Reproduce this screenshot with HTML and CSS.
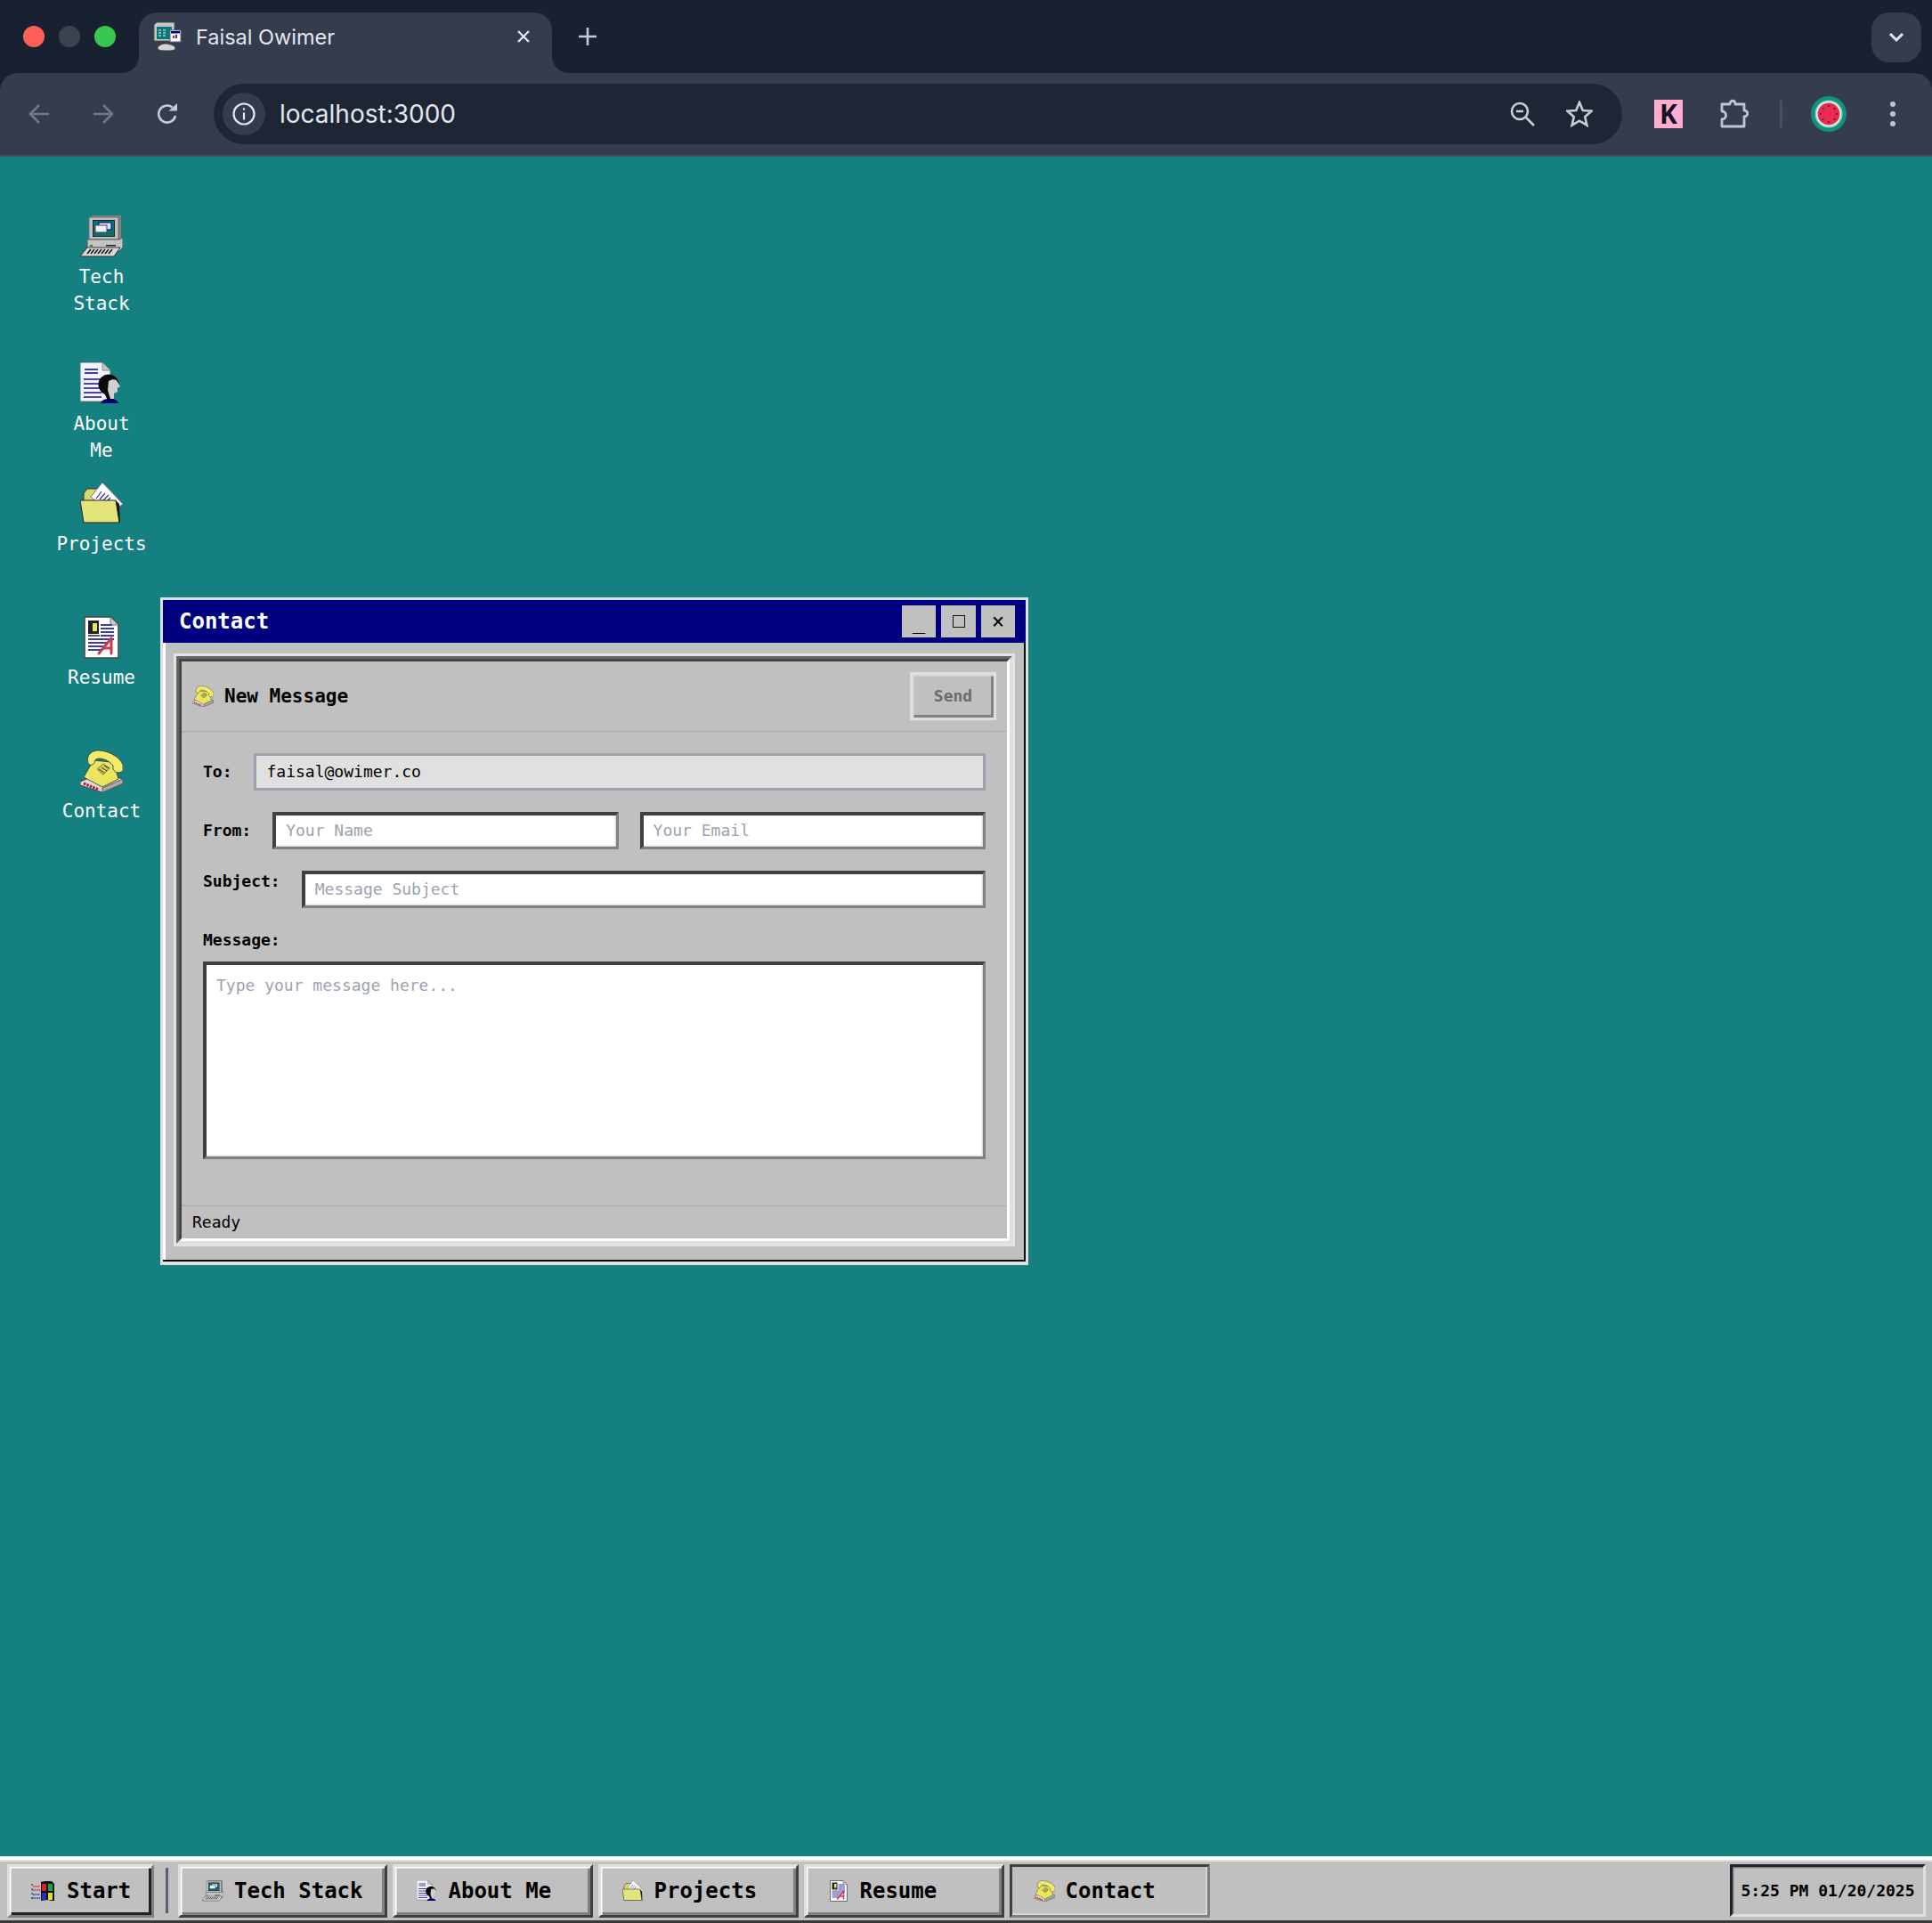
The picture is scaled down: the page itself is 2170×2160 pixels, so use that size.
FILE: index.html
```html
<!DOCTYPE html>
<html>
<head>
    <meta charset="UTF-8">
    <title>Faisal Owimer</title>
    <link rel="stylesheet" href="styles.css">
</head>
<body>
    <!-- icon sprites -->
    <svg class="sprites" aria-hidden="true">
        <symbol id="i-computer" viewBox="0 0 48 48">
            <path d="M12 2 14 0H46V26L44 28H12Z" fill="#808080"/>
            <path d="M10 2H43V27H10Z" fill="#c0c0c0" stroke="#6e6e6e"/>
            <rect x="14" y="5" width="25" height="19" fill="#222"/>
            <rect x="15" y="6" width="23" height="17" fill="#0b7070"/>
            <rect x="21" y="8" width="14" height="8" fill="#dfe4f4" stroke="#000080"/>
            <rect x="17" y="11" width="13" height="8" fill="#eef0fa" stroke="#445"/>
            <path d="M8 27H44L48 25V36L44 40H8Z" fill="#c4c4c4" stroke="#555"/>
            <rect x="11" y="33" width="3" height="2" fill="#1ea01e"/>
            <rect x="29" y="33" width="11" height="1.5" fill="#222"/>
            <path d="M0 46 8 36H45L38 46Z" fill="#d8d8d8" stroke="#333"/>
            <path d="M8 43 12 38M12 43 16 38M16 43 20 38M20 43 24 38M24 43 28 38M28 43 32 38M32 43 36 38" stroke="#111" stroke-width="1.5"/>
        </symbol>
        <symbol id="i-about" viewBox="0 0 48 48">
            <path d="M0 0H25L34 9V44H0Z" fill="#f4f4ff" stroke="#666"/>
            <path d="M25 0V9H34Z" fill="#c8c8c8" stroke="#888"/>
            <path d="M5 8H20M5 12H20" stroke="#4040a0" stroke-width="2"/>
            <path d="M4 19H24M4 24H24M4 29H24M4 34H24M4 39H24" stroke="#4848a8" stroke-width="2"/>
            <path d="M23 46C24 42 28 41 33 41S42 42 43 46Z" fill="#000080"/>
            <circle cx="32" cy="25" r="11.5" fill="#0a0a0a"/>
            <path d="M27 34 31 43 38 42 38 34Z" fill="#0a0a0a"/>
            <path d="M32 21C37 18 41 19 42 22L45 27 42 29 42 33 38 35 38 41 34 41 31 31Z" fill="#d0d0d0"/>
        </symbol>
        <symbol id="i-folder" viewBox="0 0 48 48">
            <path d="M4 12 8 7H20V18H40V44H4Z" fill="#d8d870" stroke="#333"/>
            <path d="M12 16 25 0 48 24 40 30 28 30Z" fill="#fff" stroke="#777"/>
            <path d="M18 18 24 10M22 19 28 12M26 20 32 14M30 21 34 17" stroke="#3030a0" stroke-width="1.2"/>
            <path d="M0 20H40L44 45H4Z" fill="#e4e47c" stroke="#222"/>
            <path d="M44 45 40 20 44 24 45 45Z" fill="#1a1a1a"/>
        </symbol>
        <symbol id="i-resume" viewBox="0 0 48 48">
            <path d="M5 1H34L43 10V47H5Z" fill="#fff" stroke="#444" stroke-width="1.5"/>
            <path d="M34 1V10H43Z" fill="#c8c8c8" stroke="#777"/>
            <rect x="9" y="5" width="12" height="15" fill="#222"/>
            <rect x="14" y="8" width="5" height="9" fill="#e6e66a"/>
            <path d="M9 22H22" stroke="#222" stroke-width="1.5"/>
            <path d="M23 10H36M23 14H38M23 18H38M23 22H38M9 26H38M9 30H32M9 34H28M9 38H25" stroke="#3c3ca8" stroke-width="2"/>
            <g stroke="#c83c50" stroke-width="3" stroke-linecap="round">
                <line x1="21" y1="42" x2="35" y2="25"/>
                <line x1="35" y1="25" x2="35" y2="42"/>
                <line x1="26" y1="36" x2="35" y2="36"/>
            </g>
        </symbol>
        <symbol id="i-phone" viewBox="0 0 48 48">
            <path d="M0 36 24 26 48 33V38L25 48 0 40Z" fill="#dcdcdc" stroke="#444"/>
            <path d="M25 48V43L48 33V38Z" fill="#a8a8a8" stroke="#666"/>
            <path d="M4 38 21 45" stroke="#b8102a" stroke-width="3" stroke-dasharray="2.5 1.2"/>
            <path d="M4 31 15 12 35 14 41 26 43 33 25 42Z" fill="#e9e55e" stroke="#333" stroke-width=".8"/>
            <path d="M19 22 26 16 33 21 26 28Z" fill="#d6d24c" stroke="#555" stroke-width=".8"/>
            <path d="M21 22 27 26M24 20 30 24M27 18 32 21" stroke="#333" stroke-width="1"/>
            <path d="M9 15C6 6 14 0 22 1 34 2 45 9 48 17L48 24C44 27 39 26 37 22L37 18C32 12 26 10 21 10 18 10 16 12 16 15 14 18 10 18 9 15Z" fill="#f0ec6a" stroke="#333" stroke-width=".8"/>
        </symbol>
        <symbol id="i-start" viewBox="0 0 28 24">
            <path d="M1 5H3M1 10H3M1 15H3M1 20H3" stroke="#555" stroke-width="1.5"/>
            <path d="M3 7H11M2 11H11" stroke="#d62020" stroke-width="1.6" stroke-dasharray="1.6 1"/>
            <path d="M3 16H11M2 20H11" stroke="#2030c0" stroke-width="1.6" stroke-dasharray="1.6 1"/>
            <path d="M12 2 16 1H24L27 4V23H24L20 22 12 23Z" fill="#111"/>
            <rect x="13" y="4" width="5" height="8" fill="#e02020"/>
            <rect x="20" y="4" width="5" height="8" fill="#20a040"/>
            <rect x="13" y="14" width="5" height="8" fill="#2030d0"/>
            <rect x="20" y="14" width="5" height="8" fill="#e8d820"/>
        </symbol>
        <symbol id="i-favicon" viewBox="0 0 32 32">
            <path d="M1 3 4 0H24V21H1Z" fill="#c8c8c8" stroke="#555"/>
            <rect x="4" y="5" width="17" height="14" fill="#0b7878"/>
            <path d="M6 9H9M11 9H14M6 12H9M11 12H14M6 15H9M11 15H14" stroke="#dff" stroke-width="1.2"/>
            <rect x="19" y="9" width="12" height="13" fill="#fff" stroke="#666"/>
            <rect x="20" y="10" width="10" height="2.5" fill="#000080"/>
            <rect x="22" y="15" width="2" height="3" fill="#d02020"/>
            <rect x="25" y="14" width="2" height="4" fill="#2030c0"/>
            <path d="M5 29C5 26 11 24 14 24S25 26 25 29 20 32 14 32 5 31 5 29Z" fill="#d4d4d4" stroke="#444"/>
        </symbol>
    </svg>

    <!-- browser chrome -->
    <div class="chrome">
        <div class="tabstrip">
            <div class="lights">
                <span class="light red"></span>
                <span class="light off"></span>
                <span class="light green"></span>
            </div>
            <div class="tab">
                <svg class="favicon"><use href="#i-favicon"/></svg>
                <span class="tab-title">Faisal Owimer</span>
                <svg class="tab-close" viewBox="0 0 16 16"><path d="M2 2 14 14M14 2 2 14"/></svg>
            </div>
            <svg class="new-tab" viewBox="0 0 24 24"><path d="M12 2V22M2 12H22"/></svg>
            <div class="tab-menu">
                <svg viewBox="0 0 18 12"><path d="M2 2 9 9 16 2"/></svg>
            </div>
        </div>
        <div class="toolbar">
            <svg class="nav-icon dim" viewBox="0 0 24 24"><path d="M23 12H2M12 2 2 12 12 22"/></svg>
            <svg class="nav-icon dim" viewBox="0 0 24 24"><path d="M1 12H22M12 2 22 12 12 22"/></svg>
            <svg class="nav-icon" viewBox="0 0 24 24"><path d="M21 14A9.5 9.5 0 1 1 17.5 4.5"/><path class="solid" d="M13.5 8.5H23V0Z"/></svg>
            <div class="omnibox">
                <div class="site-info">
                    <svg viewBox="0 0 26 26"><circle cx="13" cy="13" r="11.5"/><path d="M13 11.5V19.5"/><circle class="solid" cx="13" cy="7.5" r="1.2"/></svg>
                </div>
                <span class="url">localhost:3000</span>
                <svg class="zoom-icon" viewBox="0 0 28 28"><circle cx="11" cy="11" r="9"/><path d="M17.5 17.5 27 27M7 11H15"/></svg>
                <svg class="star-icon" viewBox="0 0 30 30"><path d="M15 2 18.8 11 28.5 11.8 21.2 18.2 23.4 27.7 15 22.7 6.6 27.7 8.8 18.2 1.5 11.8 11.2 11Z"/></svg>
            </div>
            <div class="ext-k">K</div>
            <svg class="puzzle" viewBox="0 0 34 34"><path d="M4 6H13C13 1 19 1 19 6H29V13C34 13 34 20 29 20V31H4V23C10 23 10 14 4 14Z"/></svg>
            <span class="toolbar-sep"></span>
            <svg class="avatar" viewBox="0 0 40 40">
                <circle cx="20" cy="20" r="20" fill="#14907e"/>
                <circle cx="20" cy="20" r="15.5" fill="#7fd8bd"/>
                <circle cx="20" cy="20" r="14" fill="#e8f5ec"/>
                <circle cx="20" cy="20" r="12.5" fill="#ea2c55"/>
                <g fill="#30141c">
                    <circle cx="20" cy="11" r="1"/><circle cx="20" cy="29" r="1"/>
                    <circle cx="11" cy="20" r="1"/><circle cx="29" cy="20" r="1"/>
                    <circle cx="13.5" cy="14" r="1"/><circle cx="26.5" cy="14" r="1"/>
                    <circle cx="13.5" cy="26" r="1"/><circle cx="26.5" cy="26" r="1"/>
                </g>
            </svg>
            <div class="kebab"><span></span><span></span><span></span></div>
        </div>
    </div>

    <!-- desktop -->
    <div class="desktop">
        <div class="desktop-icons">
            <div class="desktop-icon two-line">
                <svg class="icon-lg"><use href="#i-computer"/></svg>
                <span>Tech<br>Stack</span>
            </div>
            <div class="desktop-icon squeezed">
                <svg class="icon-lg"><use href="#i-about"/></svg>
                <span>About<br>Me</span>
            </div>
            <div class="desktop-icon">
                <svg class="icon-lg"><use href="#i-folder"/></svg>
                <span>Projects</span>
            </div>
            <div class="desktop-icon">
                <svg class="icon-lg"><use href="#i-resume"/></svg>
                <span>Resume</span>
            </div>
            <div class="desktop-icon">
                <svg class="icon-lg"><use href="#i-phone"/></svg>
                <span>Contact</span>
            </div>
        </div>

        <div class="window">
            <div class="title-bar">
                <span class="title-text">Contact</span>
                <div class="title-buttons">
                    <button class="title-btn">_</button>
                    <button class="title-btn wide"><span class="max-box"></span></button>
                    <button class="title-btn">×</button>
                </div>
            </div>
            <div class="window-body">
                <div class="panel">
                    <div class="panel-mid">
                        <div class="panel-inner">
                            <div class="mail-header">
                                <svg class="icon-sm"><use href="#i-phone"/></svg>
                                <span class="mail-title">New Message</span>
                                <button class="send-btn" disabled>Send</button>
                            </div>
                            <div class="mail-form">
                                <div class="form-row">
                                    <label>To:</label>
                                    <input class="field locked" type="text" value="faisal@owimer.co" readonly>
                                </div>
                                <div class="form-row">
                                    <label>From:</label>
                                    <input class="field" type="text" placeholder="Your Name">
                                    <input class="field" type="text" placeholder="Your Email">
                                </div>
                                <div class="form-row top">
                                    <label>Subject:</label>
                                    <input class="field" type="text" placeholder="Message Subject">
                                </div>
                                <label class="message-label">Message:</label>
                                <textarea class="field message" placeholder="Type your message here..."></textarea>
                            </div>
                            <div class="status-bar">Ready</div>
                        </div>
                    </div>
                </div>
            </div>
        </div>
    </div>

    <!-- taskbar -->
    <div class="taskbar">
        <button class="task-btn start">
            <svg class="icon-start"><use href="#i-start"/></svg>
            Start
        </button>
        <span class="task-sep"></span>
        <button class="task-btn"><svg class="icon-sm"><use href="#i-computer"/></svg>Tech Stack</button>
        <button class="task-btn"><svg class="icon-sm"><use href="#i-about"/></svg>About Me</button>
        <button class="task-btn"><svg class="icon-sm"><use href="#i-folder"/></svg>Projects</button>
        <button class="task-btn"><svg class="icon-sm"><use href="#i-resume"/></svg>Resume</button>
        <button class="task-btn active"><svg class="icon-sm"><use href="#i-phone"/></svg>Contact</button>
        <div class="clock">5:25 PM 01/20/2025</div>
    </div>
</body>
</html>
```

FILE: styles.css
```css
* {
    box-sizing: border-box;
}

html, body {
    height: 100%;
}

body {
    margin: 0;
    display: flex;
    flex-direction: column;
    background-color: #148080;
    font-family: "DejaVu Sans Mono", monospace;
    color: #000;
    overflow: hidden;
}

.sprites {
    display: none;
}

/* browser chrome */
.chrome {
    flex: none;
    background-color: #182130;
}

.tabstrip {
    height: 82px;
    display: flex;
    align-items: flex-start;
    padding: 14px 12px 0 0;
}

.lights {
    width: 156px;
    height: 54px;
    display: flex;
    align-items: center;
    gap: 16px;
    padding-left: 26px;
}

.light {
    width: 24px;
    height: 24px;
    border-radius: 50%;
}

.light.red { background-color: #ff5f57; }
.light.off { background-color: #3a4350; }
.light.green { background-color: #38c84f; }

.tab {
    position: relative;
    width: 464px;
    height: 68px;
    display: flex;
    align-items: center;
    padding: 0 24px 14px 16px;
    background-color: #343c4e;
    border-radius: 20px 20px 0 0;
}

/* flared tab feet */
.tab::before,
.tab::after {
    content: "";
    position: absolute;
    bottom: 0;
    width: 20px;
    height: 20px;
}

.tab::before {
    left: -20px;
    background: radial-gradient(circle at 0 0, #182130 20px, #343c4e 20.5px);
}

.tab::after {
    right: -20px;
    background: radial-gradient(circle at 100% 0, #182130 20px, #343c4e 20.5px);
}

.favicon {
    width: 32px;
    height: 32px;
    margin-right: 16px;
}

.tab-title {
    flex: 1;
    font-family: Inter, sans-serif;
    font-size: 23.5px;
    color: #e3e6ee;
}

.tab-close {
    width: 16px;
    height: 16px;
    fill: none;
    stroke: #e3e6ee;
    stroke-width: 2.4;
}

.new-tab {
    width: 24px;
    height: 24px;
    margin: 15px 0 0 28px;
    fill: none;
    stroke: #c5cbdc;
    stroke-width: 2.6;
}

.tab-menu {
    margin-left: auto;
    width: 56px;
    height: 56px;
    display: flex;
    align-items: center;
    justify-content: center;
    background-color: #343c4e;
    border-radius: 20px;
}

.tab-menu svg {
    width: 18px;
    height: 12px;
    fill: none;
    stroke: #e3e6ee;
    stroke-width: 3;
}

.toolbar {
    height: 94px;
    display: flex;
    align-items: center;
    padding-left: 32px;
    background-color: #343c4e;
    border-bottom: 2px solid #454c5c;
    border-radius: 20px 20px 0 0;
}

.nav-icon {
    width: 24px;
    height: 24px;
    margin-right: 48px;
    fill: none;
    stroke: #c5cbdc;
    stroke-width: 2.6;
}

.nav-icon.dim {
    stroke: #70778a;
}

.nav-icon .solid {
    fill: #c5cbdc;
    stroke: none;
}

.omnibox {
    width: 1582px;
    height: 68px;
    flex: none;
    margin-left: -8px;
    display: flex;
    align-items: center;
    padding: 0 33px 0 10px;
    background-color: #1e2635;
    border-radius: 34px;
}

.site-info {
    width: 48px;
    height: 48px;
    display: flex;
    align-items: center;
    justify-content: center;
    background-color: #343c4e;
    border-radius: 50%;
    margin-right: 16px;
}

.site-info svg {
    width: 26px;
    height: 26px;
    fill: none;
    stroke: #e3e6ee;
    stroke-width: 2.2;
}

.site-info .solid {
    fill: #e3e6ee;
    stroke: none;
}

.url {
    flex: 1;
    font-family: Inter, sans-serif;
    font-size: 28px;
    color: #e3e6ee;
}

.zoom-icon {
    width: 28px;
    height: 28px;
    margin-right: 35px;
    fill: none;
    stroke: #c8ccd6;
    stroke-width: 2.6;
}

.star-icon {
    width: 30px;
    height: 30px;
    fill: none;
    stroke: #c8ccd6;
    stroke-width: 2.6;
}

.ext-k {
    width: 32px;
    height: 32px;
    margin-left: 36px;
    background-color: #ffaed0;
    color: #14102a;
    font-family: "Open Sans", sans-serif;
    font-weight: 700;
    font-size: 30px;
    line-height: 32px;
    text-align: center;
}

.puzzle {
    width: 34px;
    height: 34px;
    margin-left: 40px;
    fill: none;
    stroke: #bcc5de;
    stroke-width: 2.8;
    stroke-linejoin: round;
}

.toolbar-sep {
    width: 3px;
    height: 32px;
    margin-left: 35px;
    background-color: #4a5163;
    border-radius: 2px;
}

.avatar {
    width: 40px;
    height: 40px;
    margin-left: 32px;
}

.kebab {
    display: flex;
    flex-direction: column;
    gap: 5px;
    margin-left: 49px;
}

.kebab span {
    width: 6px;
    height: 6px;
    border-radius: 50%;
    background-color: #bcc5de;
}

/* desktop */
.desktop {
    flex: 1;
    position: relative;
    min-height: 0;
}

.desktop-icons {
    width: 228px;
    padding-top: 66px;
    display: flex;
    flex-direction: column;
}

.desktop-icon {
    height: 150px;
    display: flex;
    flex-direction: column;
    align-items: center;
    gap: 6px;
    color: #fff;
    font-size: 21px;
    line-height: 30px;
    text-align: center;
}

.desktop-icon.two-line {
    height: 165px;
}

.desktop-icon.squeezed {
    height: 135px;
}

.icon-lg {
    width: 48px;
    height: 48px;
    flex: none;
}

.icon-sm {
    width: 24px;
    height: 24px;
    flex: none;
}

.icon-start {
    width: 28px;
    height: 24px;
    flex: none;
}

/* contact window */
.window {
    position: absolute;
    left: 180px;
    top: 495px;
    width: 975px;
    border: 3px solid #dfdfdf;
    border-bottom-width: 4px;
    background-color: #c0c0c0;
    box-shadow: inset -2px -2px 0 #0a0a0a, inset 3px 3px 0 #fff;
}

.title-bar {
    height: 48px;
    display: flex;
    align-items: center;
    justify-content: space-between;
    padding: 0 12px 0 18px;
    background-color: #000080;
}

.title-text {
    color: #fff;
    font-weight: 700;
    font-size: 24px;
}

.title-buttons {
    display: flex;
    gap: 6px;
}

.title-btn {
    width: 38px;
    height: 36px;
    padding: 0;
    border: none;
    display: flex;
    align-items: center;
    justify-content: center;
    background-color: #c0c0c0;
    font-family: inherit;
    font-size: 24px;
    line-height: 36px;
    color: #000;
}

.title-btn.wide {
    width: 39px;
}

.max-box {
    width: 14px;
    height: 14px;
    border: 1.5px solid #111;
}

.window-body {
    padding: 12px 12px 17px 12px;
}

.panel {
    border: 3px solid #e4e4e8;
}

.panel-mid {
    border: 3px solid;
    border-color: #666 #dfdfdf #dfdfdf #666;
}

.panel-inner {
    height: 654px;
    display: flex;
    flex-direction: column;
    border: 3px solid;
    border-color: #444 #fff #fff #444;
}

.mail-header {
    height: 79px;
    flex: none;
    display: flex;
    align-items: center;
    gap: 12px;
    padding: 0 12px;
    border-bottom: 1px solid #a6abb8;
}

.mail-title {
    flex: 1;
    font-weight: 700;
    font-size: 21px;
}

.send-btn {
    width: 97px;
    height: 54px;
    padding: 0 0 2px 0;
    border: 3px solid #dfdfdf;
    background-color: #c0c0c0;
    box-shadow: inset 1.5px 1.5px 0 #d8d8d8, inset -3px -3px 0 #808080;
    font-family: inherit;
    font-weight: 700;
    font-size: 18px;
    color: #6b6b6b;
}

.mail-form {
    flex: 1;
    display: flex;
    flex-direction: column;
    padding: 24px 24px 0 24px;
    font-size: 18px;
}

.form-row {
    display: flex;
    align-items: center;
    gap: 24px;
    margin-bottom: 24px;
}

.form-row.top {
    align-items: flex-start;
}

.form-row label,
.message-label {
    font-weight: 700;
    line-height: 24px;
    flex: none;
}

.field {
    flex: 1;
    min-width: 0;
    height: 42px;
    padding: 0 12px 2px 12px;
    border: 3px solid;
    border-color: #404040 #808080 #808080 #404040;
    border-radius: 0;
    outline: none;
    background-color: #fff;
    box-shadow: inset 1px 1px 0 #404040, inset -1.5px -1.5px 0 #dfdfdf;
    font-family: inherit;
    font-size: 18px;
    color: #000;
}

.field::placeholder {
    color: #9ca3af;
    opacity: 1;
}

.field.locked {
    border-color: #9ca3af;
    background-color: #e0e0e0;
    box-shadow: none;
}

.message-label {
    margin-bottom: 12px;
}

.field.message {
    flex: none;
    height: 222px;
    padding: 12px;
    line-height: 24px;
    resize: none;
}

.status-bar {
    height: 37px;
    flex: none;
    padding: 3px 12px 0 12px;
    border-top: 1px solid #a6abb8;
    font-size: 18px;
    line-height: 30px;
}

/* taskbar */
.taskbar {
    height: 75px;
    flex: none;
    display: flex;
    align-items: flex-start;
    padding: 5px 7px 0 8px;
    gap: 6px;
    background-color: #c0c0c0;
    border-top: 4px solid #fff;
    border-bottom: 3px solid #3a3a3a;
    box-shadow: inset 0 2px 0 #dfdfdf;
}

.task-btn {
    min-width: 225px;
    height: 60px;
    display: flex;
    align-items: center;
    gap: 12px;
    padding: 0 24px 0 24px;
    border: 3px solid;
    border-color: #dfdfdf #404040 #404040 #dfdfdf;
    background-color: #c0c0c0;
    box-shadow: inset 1.5px 1.5px 0 #fff, inset -3px -3px 0 #808080;
    font-family: inherit;
    font-weight: 700;
    font-size: 24px;
    color: #000;
    white-space: nowrap;
}

.task-btn.start {
    min-width: 165px;
    width: 165px;
    gap: 13px;
    padding: 0 20px 0 23px;
    border-color: #dfdfdf #808080 #808080 #dfdfdf;
    box-shadow: inset 1.5px 1.5px 0 #fff, inset -3px -3px 0 #222;
}

.task-btn.active {
    border-color: #404040 #808080 #808080 #404040;
    box-shadow: inset -1.5px -1.5px 0 #dfdfdf;
}

.task-sep {
    width: 3px;
    height: 51px;
    margin: 4px 5px 0 7px;
    background-color: #566070;
}

.clock {
    margin-left: auto;
    width: 220px;
    height: 59px;
    display: flex;
    align-items: center;
    justify-content: center;
    border: 3px solid;
    border-color: #22222e #dfdfdf #dfdfdf #22222e;
    box-shadow: inset 1.5px 1.5px 0 #808080;
    font-weight: 700;
    font-size: 18px;
}
```
